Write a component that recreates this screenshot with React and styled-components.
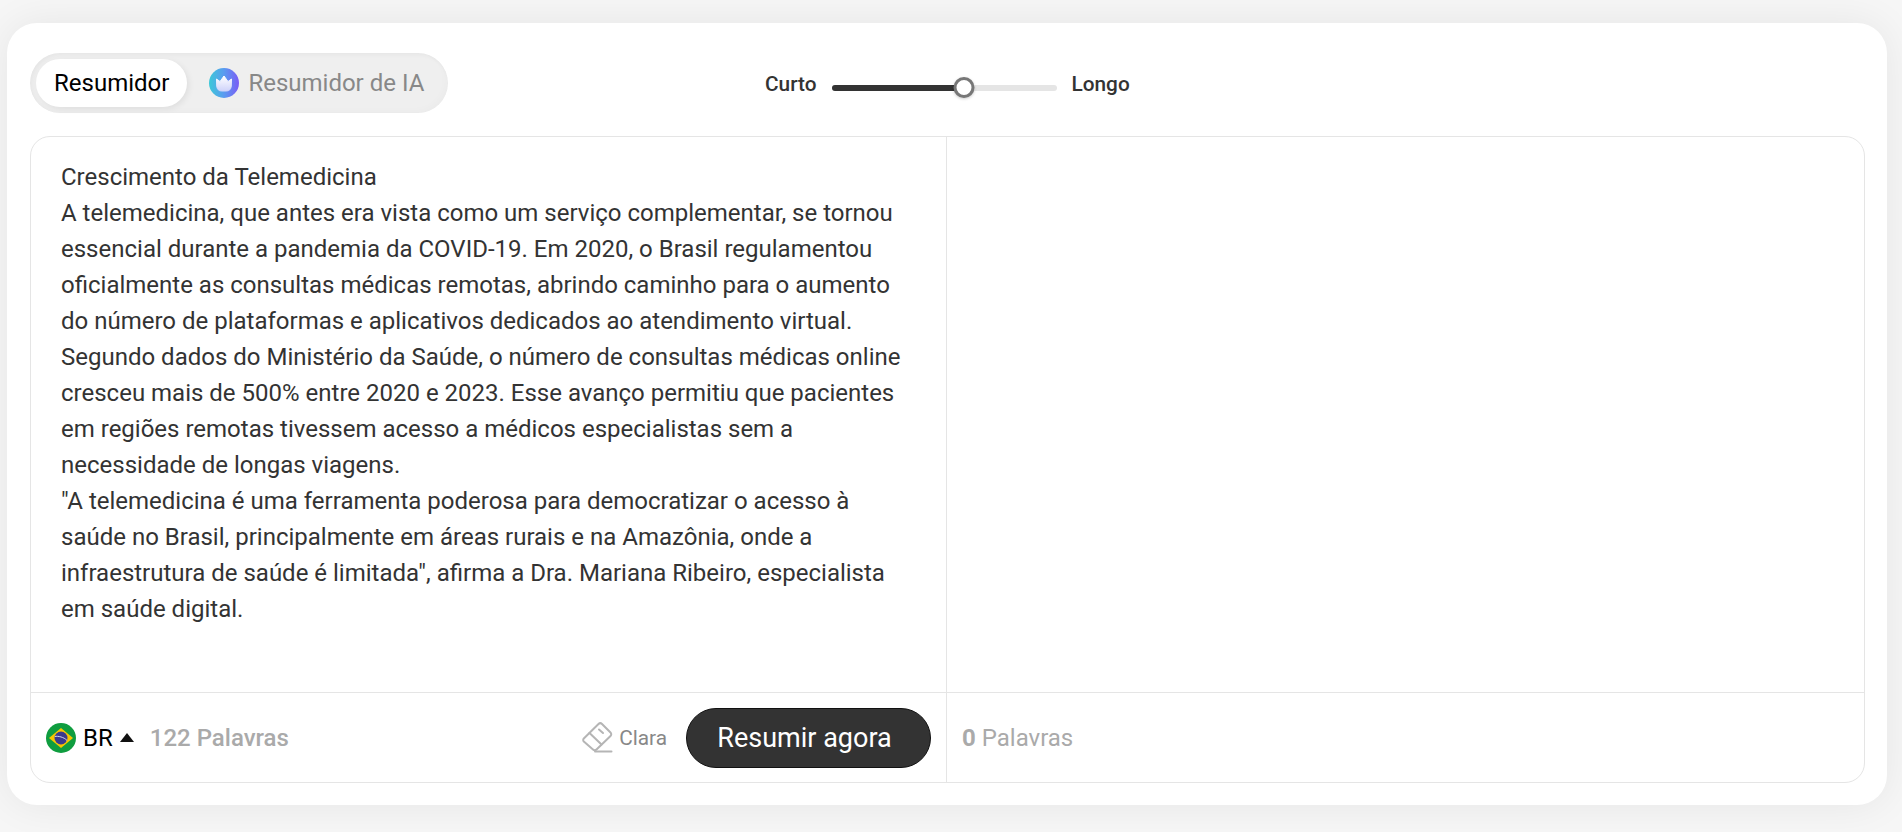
import React from 'react';
import styled, { createGlobalStyle } from 'styled-components';

const GlobalStyle = createGlobalStyle`
  html, body {
    margin: 0;
    padding: 0;
    height: 100%;
    background: #f6f6f6;
    font-family: Roboto, "Liberation Sans", sans-serif;
  }
`;

const Page = styled.div`
  height: 832px;
  box-sizing: border-box;
  padding: 23px 15px 27px 7px;
  overflow: hidden;
`;

const Card = styled.div`
  height: 782px;
  box-sizing: border-box;
  background: #fff;
  border-radius: 30px;
  padding: 30px 22px 22px 23px;
  box-shadow: 0 0 40px rgba(0, 0, 0, 0.07);
`;

const Toolbar = styled.div`
  display: flex;
  align-items: center;
  height: 60px;
  margin-bottom: 23px;
`;

const Tabs = styled.div`
  display: flex;
  align-items: center;
  width: 418px;
  height: 60px;
  box-sizing: border-box;
  padding: 0 6px;
  border-radius: 30px;
  background: #efefef;
  box-shadow: inset 2px 2px 4px rgba(0, 0, 0, 0.04), inset -3px -3px 6px rgba(0, 0, 0, 0.015);
`;

const Tab = styled.div`
  display: flex;
  align-items: center;
  height: 48px;
  font-size: 24px;
  white-space: nowrap;
  border-radius: 24px;
  padding: 0 18px;
  margin-left: ${props => (props.$active ? 0 : 4)}px;
  color: ${props => (props.$active ? '#000' : '#888')};
  background: ${props => (props.$active ? '#fff' : 'transparent')};
  box-shadow: ${props => (props.$active ? '2px 2px 6px rgba(0,0,0,0.07)' : 'none')};
`;

const CrownBadge = styled.svg`
  width: 30px;
  height: 30px;
  margin-right: 9px;
  flex-shrink: 0;
`;

const SliderRow = styled.div`
  display: flex;
  align-items: center;
  margin-left: 317px;
  padding-top: 2px;
  font-size: 20.8px;
  font-weight: 500;
  color: #333;
`;

const Track = styled.div`
  position: relative;
  width: 225px;
  height: 6px;
  margin: 8px 15px 0;
  border-radius: 3px;
  background: #e5e5e5;
`;

const TrackFill = styled.div`
  height: 100%;
  border-radius: 3px;
  background: #333;
`;

const Thumb = styled.div`
  position: absolute;
  top: -8px;
  width: 21px;
  height: 21px;
  box-sizing: border-box;
  border: 3px solid #777;
  border-radius: 50%;
  background: #fff;
  transform: translateX(-50%);
  box-shadow: 0 1px 3px rgba(0, 0, 0, 0.2);
`;

const Panel = styled.div`
  display: grid;
  grid-template-columns: 916px 1fr;
  grid-template-rows: 1fr 90px;
  height: 647px;
  box-sizing: border-box;
  border: 1px solid #e5e5e5;
  border-radius: 20px;
  overflow: hidden;
`;

const SourceText = styled.div`
  padding: 22px 30px 0;
  font-size: 24px;
  line-height: 36px;
  color: #333;
  border-right: 1px solid #e5e5e5;
`;

const Output = styled.div``;

const FooterLeft = styled.div`
  display: flex;
  align-items: center;
  padding: 0 15px;
  border-top: 1px solid #e5e5e5;
  border-right: 1px solid #e5e5e5;
`;

const FooterRight = styled.div`
  display: flex;
  align-items: center;
  padding: 0 15px;
  border-top: 1px solid #e5e5e5;
`;

const Lang = styled.div`
  display: flex;
  align-items: center;
  font-size: 24px;
  color: #000;
`;

const Caret = styled.span`
  width: 0;
  height: 0;
  margin: 0 0 0 7px;
  border-left: 7.5px solid transparent;
  border-right: 7.5px solid transparent;
  border-bottom: 9px solid #111;
`;

const WordCount = styled.div`
  font-size: 24px;
  font-weight: ${props => (props.$bold ? 500 : 400)};
  color: #aaa;
  margin-left: ${props => props.$gap || 0}px;
  b {
    font-weight: 700;
  }
`;

const Spacer = styled.div`
  flex: 1;
`;

const ClearButton = styled.div`
  display: flex;
  align-items: center;
  gap: 6px;
  font-size: 20.8px;
  color: #888;
  margin-right: 19px;
`;

const PrimaryButton = styled.button`
  width: 245px;
  height: 60px;
  border: 1px solid #111;
  border-radius: 30px;
  background: #333;
  color: #fff;
  font-family: inherit;
  font-size: 27px;
  padding: 0 8px 0 0;
`;

const paragraphs = [
  'Crescimento da Telemedicina',
  'A telemedicina, que antes era vista como um serviço complementar, se tornou essencial durante a pandemia da COVID-19. Em 2020, o Brasil regulamentou oficialmente as consultas médicas remotas, abrindo caminho para o aumento do número de plataformas e aplicativos dedicados ao atendimento virtual. Segundo dados do Ministério da Saúde, o número de consultas médicas online cresceu mais de 500% entre 2020 e 2023. Esse avanço permitiu que pacientes em regiões remotas tivessem acesso a médicos especialistas sem a necessidade de longas viagens.',
  '"A telemedicina é uma ferramenta poderosa para democratizar o acesso à saúde no Brasil, principalmente em áreas rurais e na Amazônia, onde a infraestrutura de saúde é limitada", afirma a Dra. Mariana Ribeiro, especialista em saúde digital.',
];

const Crown = () => (
  <CrownBadge viewBox="0 0 30 30">
    <defs>
      <linearGradient id="crownBg" x1="0" y1="0.5" x2="1" y2="0.5">
        <stop offset="0" stopColor="#3cc8d8" />
        <stop offset="0.5" stopColor="#5a9bf0" />
        <stop offset="1" stopColor="#7a5cf5" />
      </linearGradient>
      <linearGradient id="crownFg" x1="0" y1="0" x2="0" y2="1">
        <stop offset="0" stopColor="#ffffff" />
        <stop offset="1" stopColor="#cfd3fa" />
      </linearGradient>
    </defs>
    <circle cx="15" cy="15" r="15" fill="url(#crownBg)" />
    <path
      d="M7.5 11 L11 13.5 L15 8 L19 13.5 L22.5 11 L22.3 18 C22 21.5 20 23 17.5 23 L12.5 23 C10 23 8 21.5 7.7 18 Z"
      fill="url(#crownFg)"
      stroke="url(#crownFg)"
      strokeLinejoin="round"
    />
  </CrownBadge>
);

const BrazilFlag = () => (
  <svg width="30" height="30" viewBox="0 0 30 30" style={{ marginRight: 7 }}>
    <circle cx="15" cy="15" r="15" fill="#0f9d3f" />
    <path d="M15 5 L27 15 L15 25 L3 15 Z" fill="#f7c600" />
    <circle cx="15" cy="15" r="6.5" fill="#3b3a8c" />
    <path d="M8.8 13.5 C12 12.8 18 14 21 17.5" fill="none" stroke="#d8d8e8" strokeWidth="1" />
  </svg>
);

const Eraser = () => (
  <svg width="31" height="31" viewBox="0 0 31 31" fill="none" stroke="#b5b5b5" strokeWidth="2" strokeLinejoin="round" strokeLinecap="round">
    <path d="M1.8 16.5 L16.5 2 C17.5 1 19 1 20 2 L28.5 10.5 C29.5 11.5 29.5 13 28.5 14 L14.5 27.5 C13.5 28.5 12 28.5 11 27.5 L1.8 19.5 C1 18.7 1 17.3 1.8 16.5 Z" />
    <path d="M7.5 11 L19.5 22.5" />
    <path d="M17 7.5 L21 11" />
    <path d="M13 29.5 L29.5 29.5" />
  </svg>
);

const App = () => {
  return (
    <>
      <GlobalStyle />
      <Page>
        <Card>
          <Toolbar>
            <Tabs>
              <Tab $active>Resumidor</Tab>
              <Tab>
                <Crown />
                Resumidor de IA
              </Tab>
            </Tabs>
            <SliderRow>
              <span>Curto</span>
              <Track>
                <TrackFill style={{ width: '58.7%' }} />
                <Thumb style={{ left: '58.7%' }} />
              </Track>
              <span>Longo</span>
            </SliderRow>
          </Toolbar>
          <Panel>
            <SourceText>
              {paragraphs.map((text, index) => (
                <div key={index}>{text}</div>
              ))}
            </SourceText>
            <Output />
            <FooterLeft>
              <Lang>
                <BrazilFlag />
                BR
                <Caret />
              </Lang>
              <WordCount $bold $gap={16}>122 Palavras</WordCount>
              <Spacer />
              <ClearButton>
                <Eraser />
                Clara
              </ClearButton>
              <PrimaryButton>Resumir agora</PrimaryButton>
            </FooterLeft>
            <FooterRight>
              <WordCount><b>0</b> Palavras</WordCount>
            </FooterRight>
          </Panel>
        </Card>
      </Page>
    </>
  );
};

export default App;
